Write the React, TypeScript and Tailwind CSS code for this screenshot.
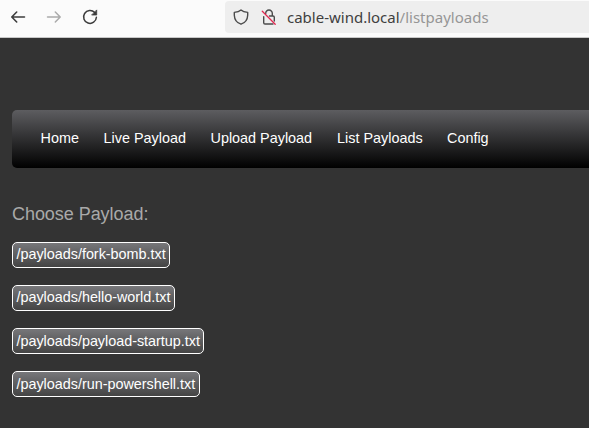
const navItems = [
  { label: "Home", width: "w-[63px]" },
  { label: "Live Payload", width: "w-[107px]" },
  { label: "Upload Payload", width: "w-[126.5px]" },
  { label: "List Payloads", width: "w-[110px]" },
  { label: "Config", width: "w-[60px]" },
];

const payloads = [
  { path: "/payloads/fork-bomb.txt", size: "w-[158px] leading-[22px]" },
  { path: "/payloads/hello-world.txt", size: "w-[163px] leading-[22px]" },
  { path: "/payloads/payload-startup.txt", size: "w-[192px] leading-[24px]" },
  { path: "/payloads/run-powershell.txt", size: "w-[188px] leading-[24px]" },
];

function BrowserBar() {
  return (
    <header className="flex h-[38px] items-start border-b border-[#c8c8c8] bg-[#fbfbfb]">
      <div className="flex h-[34px] w-[225px] items-center pl-2.5">
        <svg className="size-4 shrink-0" viewBox="0 0 16 16" fill="none" stroke="#3d3d3d" strokeWidth="1.6" strokeLinecap="round" strokeLinejoin="round">
          <path d="M14.5 8H2M6.7 3L1.8 8L6.7 13" />
        </svg>
        <svg className="ml-5 size-4 shrink-0" viewBox="0 0 16 16" fill="none" stroke="#ababab" strokeWidth="1.5" strokeLinecap="round" strokeLinejoin="round">
          <path d="M1.5 8H14M9.3 3L14.2 8L9.3 13" />
        </svg>
        <svg className="ml-5 size-4 shrink-0" viewBox="0 0 16 16" fill="none" stroke="#3d3d3d" strokeWidth="1.5" strokeLinecap="round">
          <path d="M12.7 3.6A6.4 6.4 0 1 0 14.4 8.3" />
          <path d="M14.7 1.3V6H10Z" fill="#3d3d3d" strokeWidth=".8" strokeLinejoin="round" />
        </svg>
      </div>
      <div className="mt-px flex h-8 flex-1 items-center rounded-l bg-[#eeeeee] pl-2">
        <svg className="size-4 shrink-0" viewBox="0 0 16 16" fill="none" stroke="#4b4b4b" strokeWidth="1.4" strokeLinejoin="round">
          <path d="M8 1C6.5 2.3 4 3.1 1.3 3.4V6.2C1.5 10.8 4.2 13.9 8 15.2C11.8 13.9 14.5 10.8 14.7 6.2V3.4C12 3.1 9.5 2.3 8 1Z" />
        </svg>
        <svg className="ml-3 size-4 shrink-0" viewBox="0 0 16 16" fill="none" strokeLinecap="round" strokeLinejoin="round">
          <path d="M4.7 4.4A3.3 3.3 0 0 1 11.3 4.3V7M2.7 7.7V13.7Q2.7 15 4 15H12M8.5 7H12Q13.3 7 13.3 8.3V12" stroke="#4b4b4b" strokeWidth="1.4" />
          <path d="M1.3 2.3L14.2 15.2" stroke="#e22850" strokeWidth="1.3" />
        </svg>
        <span className="ml-[10px] whitespace-nowrap font-['Noto_Sans',sans-serif] text-[15px] leading-5 text-[#404040]">
          cable-wind.local<span className="text-[#969696]">/listpayloads</span>
        </span>
      </div>
    </header>
  );
}

export default function App() {
  return (
    <div className="h-[428px] overflow-hidden bg-[#333333] font-['Liberation_Sans',Arial,sans-serif]">
      <BrowserBar />
      <main className="pl-3 pt-[72px]">
        <nav className="flex h-[58px] items-center rounded-l-[5px] bg-linear-to-b/srgb from-[#5d5d60] to-black pl-[28.5px] text-[14.4px] text-white">
          {navItems.map((item) => (
            <a key={item.label} href="#" className={`shrink-0 whitespace-nowrap ${item.width}`}>
              {item.label}
            </a>
          ))}
        </nav>
        <h1 className="mt-[35px] text-[18px] leading-[22px] tracking-[-0.05px] text-[#a9a9a9]">Choose Payload:</h1>
        <div className="mt-[17px] flex flex-col items-start gap-[17px]">
          {payloads.map((payload) => (
            <button
              key={payload.path}
              className={`flex h-[26px] items-start whitespace-nowrap rounded-[5px] border border-white bg-linear-to-b/srgb from-[#77777a] to-[#444444] pl-[3.5px] text-left text-[14.4px] tracking-[-0.02px] text-white ${payload.size}`}
            >
              {payload.path}
            </button>
          ))}
        </div>
      </main>
    </div>
  );
}
